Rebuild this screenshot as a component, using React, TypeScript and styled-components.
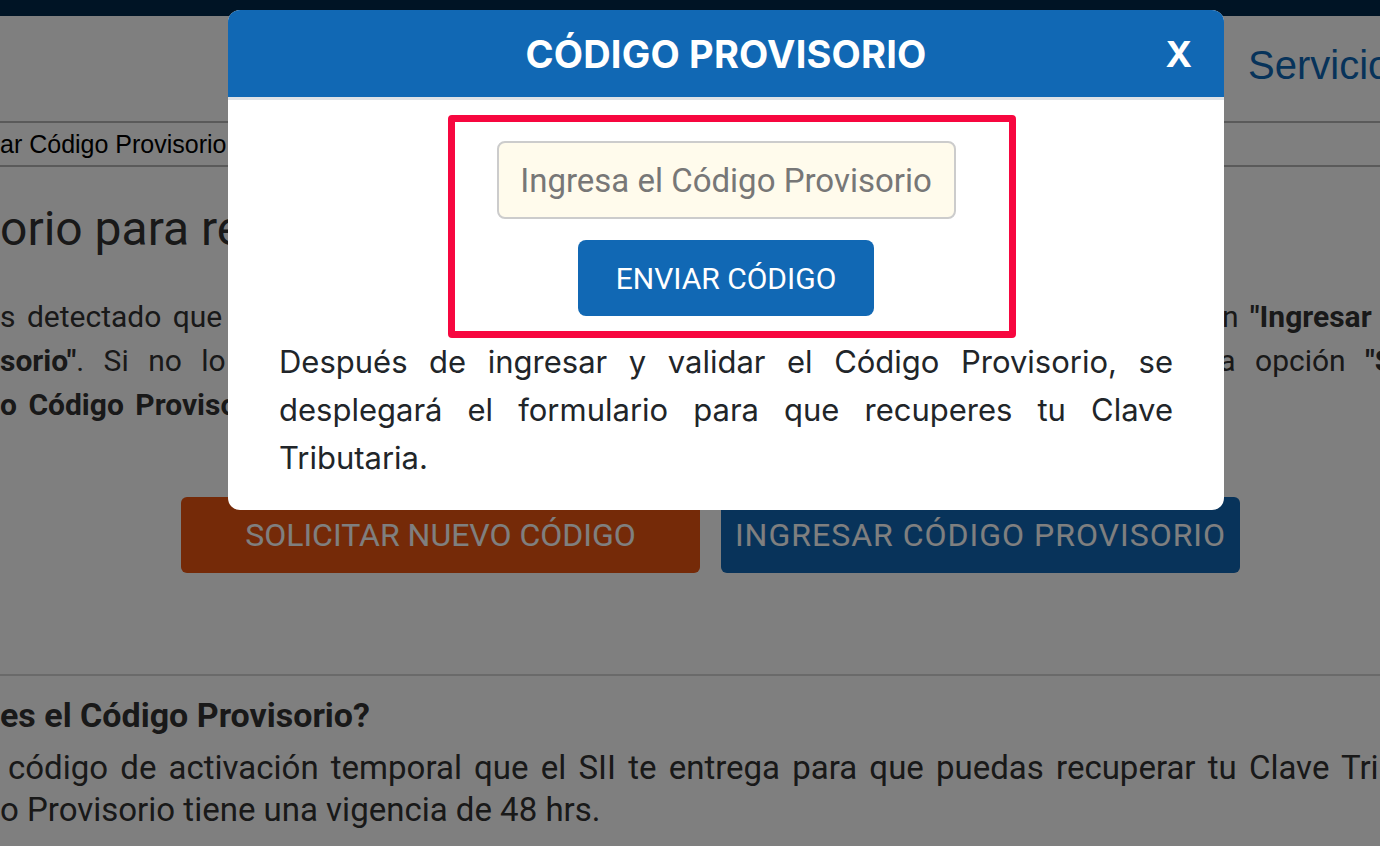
import styled, { createGlobalStyle } from 'styled-components';

const GlobalStyle = createGlobalStyle`
  html, body {
    margin: 0;
    padding: 0;
    background: #ffffff;
    overflow: hidden;
  }
  * {
    box-sizing: border-box;
  }
`;

const Page = styled.div`
  width: 1380px;
  height: 846px;
  overflow: hidden;
  font-family: Roboto, "Liberation Sans", sans-serif;
  color: #333333;
  background: #ffffff;
`;

const TopBar = styled.div`
  height: 16px;
  background: #00284a;
`;

const Header = styled.header`
  height: 107px;
  border-bottom: 2px solid #b4b4b4;
  display: flex;
  align-items: center;
  padding-left: 1248px;
  white-space: nowrap;
`;

const NavLink = styled.span`
  font-family: "Liberation Sans", Arial, sans-serif;
  font-size: 40px;
  color: #0e66b4;
  padding-bottom: 6px;
`;

const Breadcrumb = styled.div`
  height: 44px;
  border-bottom: 2px solid #b4b4b4;
  display: flex;
  align-items: center;
  font-family: "Liberation Sans", Arial, sans-serif;
  font-size: 25px;
  color: #000000;
  white-space: nowrap;
`;

const Content = styled.main`
  padding-top: 34px;
`;

const Title = styled.h1`
  margin: 0;
  font-size: 48px;
  font-weight: 400;
  line-height: 56px;
  color: #333333;
  white-space: nowrap;
`;

const Lines = styled.div`
  margin-top: 38px;
  font-size: 30px;
  line-height: 44px;
  color: #333333;
`;

const Line = styled.div<{ $spacing?: number }>`
  display: flex;
  white-space: nowrap;
  word-spacing: ${(p) => p.$spacing ?? 4}px;
`;

const RightPart = styled.span<{ $start: number }>`
  margin-left: auto;
  width: ${(p) => 1380 - p.$start}px;
  overflow: hidden;
`;

const ButtonRow = styled.div`
  margin-top: 70px;
  display: flex;
  gap: 21px;
  padding-left: 181px;
`;

const PageButton = styled.button<{ $tone: 'orange' | 'blue' }>`
  width: 519px;
  height: 76px;
  border: none;
  border-radius: 6px;
  background: ${(p) => (p.$tone === 'orange' ? '#ea5411' : '#1066b4')};
  color: #ffffff;
  font-family: Roboto, sans-serif;
  font-size: 32px;
  letter-spacing: ${(p) => (p.$tone === 'blue' ? '1px' : '0')};
  text-transform: uppercase;
  white-space: nowrap;
  padding: 0;
  cursor: pointer;
`;

const Divider = styled.hr`
  margin: 101px 0 0;
  border: none;
  border-top: 2px solid #d4d4d4;
`;

const FaqTitle = styled.h2`
  margin: 19px 0 0;
  font-size: 34px;
  font-weight: 700;
  line-height: 40px;
  color: #333333;
  white-space: nowrap;
`;

const FaqText = styled.p`
  margin: 12px 0 0;
  font-size: 33px;
  line-height: 42px;
  color: #333333;
  padding-left: 8px;
`;

const FaqLine = styled.span<{ $indent?: number; $spacing?: number }>`
  display: block;
  white-space: nowrap;
  margin-left: ${(p) => p.$indent ?? 0}px;
  word-spacing: ${(p) => p.$spacing ?? 0}px;
`;

const Overlay = styled.div`
  position: fixed;
  inset: 0;
  background: rgba(0, 0, 0, 0.5);
  padding: 10px 0 0 228px;
`;

const Modal = styled.div`
  width: 996px;
  height: 500px;
  background: #ffffff;
  border-radius: 12px;
  overflow: hidden;
  font-family: Inter, Roboto, sans-serif;
`;

const ModalHeader = styled.div`
  height: 90px;
  background: #1168b4;
  border-bottom: 3px solid #dee2e6;
  display: grid;
  grid-template-columns: 1fr auto 1fr;
  align-items: center;
  padding: 0 32px;
`;

const ModalTitle = styled.h3`
  grid-column: 2;
  margin: 0;
  color: #ffffff;
  font-size: 38px;
  font-weight: 700;
  letter-spacing: 0.2px;
`;

const CloseButton = styled.button`
  justify-self: end;
  background: none;
  border: none;
  padding: 0;
  color: #ffffff;
  font-family: Inter, Roboto, sans-serif;
  font-size: 36px;
  font-weight: 700;
  cursor: pointer;
`;

const Highlight = styled.div`
  margin: 15px 0 0 220px;
  width: 568px;
  height: 223px;
  border: 7px solid #f7073f;
  border-radius: 4px;
  display: flex;
  flex-direction: column;
  align-items: center;
  padding-top: 19px;
  gap: 21px;
`;

const CodeInput = styled.input`
  width: 459px;
  height: 78px;
  margin-left: -12px;
  border: 2px solid #cccccc;
  border-radius: 8px;
  background: #fffbec;
  font-family: Roboto, sans-serif;
  font-size: 33px;
  text-align: center;
  color: #333333;
  outline: none;
  padding: 0 8px;
  &::placeholder {
    color: #777777;
  }
`;

const SendButton = styled.button`
  width: 296px;
  height: 76px;
  margin-left: -12px;
  border: none;
  border-radius: 8px;
  background: #1168b4;
  color: #ffffff;
  font-family: Roboto, sans-serif;
  font-size: 30px;
  padding: 0;
  cursor: pointer;
`;

const ModalText = styled.p`
  margin: 0;
  padding: 0 51px;
  font-size: 31px;
  line-height: 48px;
  color: #212529;
  text-align: justify;
`;

export default function App() {
  return (
    <>
      <GlobalStyle />
      <Page>
        <TopBar />
        <Header>
          <NavLink>Servicios Online</NavLink>
        </Header>
        <Breadcrumb>ar Código Provisorio</Breadcrumb>
        <Content>
          <Title>orio para recuperar tu Clave Tributaria</Title>
          <Lines>
            <Line>
              <span>s detectado que tienes</span>
              <RightPart $start={1222}>
                n <b>"Ingresar Código</b>
              </RightPart>
            </Line>
            <Line $spacing={12}>
              <span>
                <b>sorio"</b>. Si no lo recuerdas
              </span>
              <RightPart $start={1212}>
                la opción <b>"Solicitar</b>
              </RightPart>
            </Line>
            <Line>
              <b>o Código Provisorio"</b>
            </Line>
          </Lines>
          <ButtonRow>
            <PageButton $tone="orange">Solicitar nuevo código</PageButton>
            <PageButton $tone="blue">Ingresar código provisorio</PageButton>
          </ButtonRow>
          <Divider />
          <FaqTitle>es el Código Provisorio?</FaqTitle>
          <FaqText>
            <FaqLine $spacing={4}>
              código de activación temporal que el SII te entrega para que puedas recuperar tu Clave Tributaria.
            </FaqLine>
            <FaqLine $indent={-8}>o Provisorio tiene una vigencia de 48 hrs.</FaqLine>
          </FaqText>
        </Content>
      </Page>
      <Overlay>
        <Modal>
          <ModalHeader>
            <ModalTitle>CÓDIGO PROVISORIO</ModalTitle>
            <CloseButton>X</CloseButton>
          </ModalHeader>
          <Highlight>
            <CodeInput placeholder="Ingresa el Código Provisorio" />
            <SendButton>ENVIAR CÓDIGO</SendButton>
          </Highlight>
          <ModalText>
            Después de ingresar y validar el Código Provisorio, se desplegará el formulario para que recuperes tu Clave
            Tributaria.
          </ModalText>
        </Modal>
      </Overlay>
    </>
  );
}
